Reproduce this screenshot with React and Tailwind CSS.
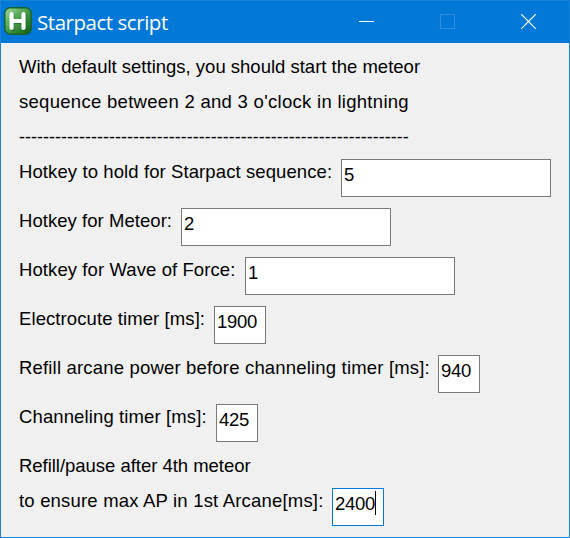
const intro = [
  { text: "With default settings, you should start the meteor", style: "" },
  { text: "sequence between 2 and 3 o'clock in lightning", style: "tracking-[0.29px]" },
  { text: "-".repeat(65), style: "text-[18px]" },
];

const fields = [
  { label: "Hotkey to hold for Starpact sequence:", value: "5", labelWidth: "w-[322px]", inputWidth: "w-[210px]", tracking: "tracking-[0.1px]" },
  { label: "Hotkey for Meteor:", value: "2", labelWidth: "w-[162px]", inputWidth: "w-[210px]", tracking: "tracking-[0.05px]" },
  { label: "Hotkey for Wave of Force:", value: "1", labelWidth: "w-[226px]", inputWidth: "w-[210px]", tracking: "tracking-[0.09px]" },
  { label: "Electrocute timer [ms]:", value: "1900", labelWidth: "w-[195px]", inputWidth: "w-[52px]", tracking: "tracking-[0.09px]" },
  { label: "Refill arcane power before channeling timer [ms]:", value: "940", labelWidth: "w-[419px]", inputWidth: "w-[42px]", tracking: "tracking-[0.18px]" },
  { label: "Channeling timer [ms]:", value: "425", labelWidth: "w-[197px]", inputWidth: "w-[42px]", tracking: "tracking-[0.12px]" },
];

function AppIcon() {
  return (
    <svg width="28" height="28" viewBox="0 0 28 28" className="shrink-0">
      <defs>
        <linearGradient id="green" x1="0" y1="0" x2="1" y2="1">
          <stop offset="0" stopColor="#a5dda0" />
          <stop offset="0.45" stopColor="#4ca14c" />
          <stop offset="1" stopColor="#0b5a12" />
        </linearGradient>
      </defs>
      <rect x="0.8" y="0.8" width="26.4" height="26.4" rx="5.5" fill="url(#green)" stroke="#17632a" strokeWidth="1.4" />
      <path d="M8.6 8.3v14.2M20.6 8.3v14.2M8.6 15h12" stroke="#145f1c" strokeOpacity="0.6" strokeWidth="4" strokeLinecap="round" fill="none" />
      <path d="M7.6 7.2v13.8M19.5 7.2v13.8M7.6 14h11.9" stroke="#fff" strokeWidth="4.2" strokeLinecap="round" fill="none" />
    </svg>
  );
}

function TitleBar() {
  return (
    <header className="flex h-[42px] items-start bg-[#0078d7] text-white">
      <div className="flex grow items-start pl-[3px] pt-[6px]">
        <AppIcon />
        <h1 className="ml-[5px] whitespace-nowrap font-['Open_Sans','Noto_Sans',sans-serif] text-[20.5px] leading-[30px] tracking-[-0.46px]">
          Starpact script
        </h1>
      </div>
      <div className="flex gap-[66px] pr-[33px] pt-[13px]">
        <svg width="15" height="15" shapeRendering="crispEdges"><path d="M0 7.5h15" stroke="#fff" /></svg>
        <svg width="15" height="15" shapeRendering="crispEdges"><rect x="0.5" y="0.5" width="14" height="14" fill="none" stroke="#338fdd" /></svg>
        <svg width="15" height="15"><path d="M0.3 0.3l14.4 14.4M14.7 0.3L0.3 14.7" stroke="#fff" strokeWidth="1.2" /></svg>
      </div>
    </header>
  );
}

function Field({ label, value, labelWidth, inputWidth, tracking, focused }) {
  return (
    <div className="flex h-[49px] items-start">
      <span className={`shrink-0 ${labelWidth}`}><span className={tracking}>{label}</span></span>
      <div className={`flex h-[38px] shrink-0 border bg-white pl-[2px] pt-[2px] tracking-[-0.28px] ${focused ? "border-[#0078d7]" : "border-[#7a7a7a]"} ${inputWidth}`}>
        <span>{value}</span>
        {focused && <i className="h-[24px] w-px bg-black" />}
      </div>
    </div>
  );
}

export default function App() {
  return (
    <div className="h-[538px] w-[570px] overflow-hidden border border-[#1883d7] bg-[#f0f0f0]">
      <TitleBar />
      <main className="whitespace-nowrap pl-[18px] pt-[11px] font-['Liberation_Sans',Arial,sans-serif] text-[18.5px] leading-[26px] text-black">
        {intro.map((line) => (
          <p key={line.text} className="h-[35px]"><span className={line.style}>{line.text}</span></p>
        ))}
        {fields.map((field) => <Field key={field.label} {...field} />)}
        <p className="h-[35px]"><span className="tracking-[-0.03px]">Refill/pause after 4th meteor</span></p>
        <Field label="to ensure max AP in 1st Arcane[ms]:" value="2400" labelWidth="w-[313px]" inputWidth="w-[52px]" tracking="tracking-[0.19px]" focused />
      </main>
    </div>
  );
}
